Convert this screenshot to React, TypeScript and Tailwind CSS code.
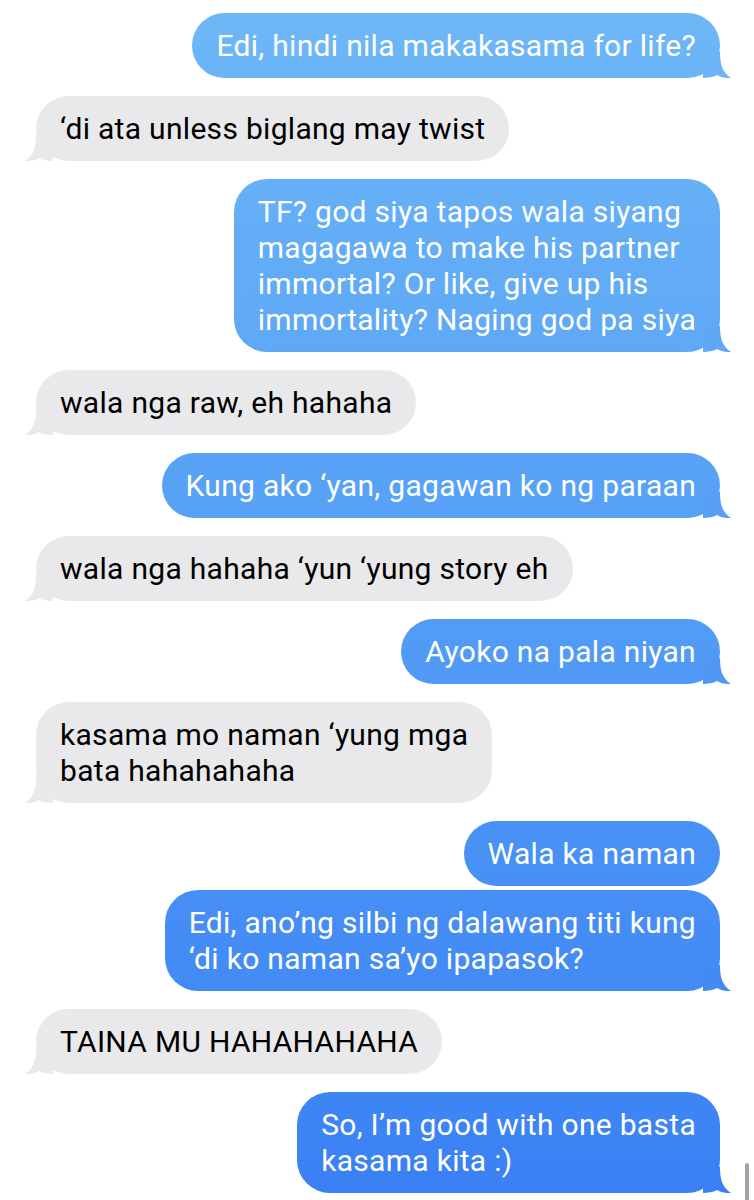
type Msg = {
  me: boolean;
  lines: string[];
  tail: boolean;
  gap: string;
};

const msgs: Msg[] = [
  { me: true, lines: ["Edi, hindi nila makakasama for life?"], tail: true, gap: "mt-0" },
  { me: false, lines: ["\u2018di ata unless biglang may twist"], tail: true, gap: "mt-[18px]" },
  {
    me: true,
    lines: [
      "TF? god siya tapos wala siyang",
      "magagawa to make his partner",
      "immortal? Or like, give up his",
      "immortality? Naging god pa siya",
    ],
    tail: true,
    gap: "mt-[18px]",
  },
  { me: false, lines: ["wala nga raw, eh hahaha"], tail: true, gap: "mt-[18px]" },
  { me: true, lines: ["Kung ako \u2018yan, gagawan ko ng paraan"], tail: true, gap: "mt-[18px]" },
  { me: false, lines: ["wala nga hahaha \u2018yun \u2018yung story eh"], tail: true, gap: "mt-[18px]" },
  { me: true, lines: ["Ayoko na pala niyan"], tail: true, gap: "mt-[18px]" },
  { me: false, lines: ["kasama mo naman \u2018yung mga", "bata hahahahaha"], tail: true, gap: "mt-[18px]" },
  { me: true, lines: ["Wala ka naman"], tail: false, gap: "mt-[18px]" },
  {
    me: true,
    lines: ["Edi, ano\u2019ng silbi ng dalawang titi kung", "\u2018di ko naman sa\u2019yo ipapasok?"],
    tail: true,
    gap: "mt-[4px]",
  },
  { me: false, lines: ["TAINA MU HAHAHAHAHA"], tail: true, gap: "mt-[18px]" },
  { me: true, lines: ["So, I\u2019m good with one basta", "kasama kita :)"], tail: true, gap: "mt-[18px]" },
];

// colour of the page-wide blue gradient at a given y (0..1200)
function blueAt(y: number) {
  const t = Math.min(1, Math.max(0, y / 1200));
  const a = [0x6e, 0xb8, 0xf7];
  const b = [0x3a, 0x80, 0xf4];
  const c = a.map((v, i) => Math.round(v + (b[i] - v) * t));
  return `rgb(${c[0]},${c[1]},${c[2]})`;
}

const tailY = [78, 160, 352, 435, 517, 600, 680, 798, 880, 984, 1065, 1193];

function Tail({ me, color }: { me: boolean; color: string }) {
  return (
    <svg
      width="28"
      height="26"
      viewBox="0 0 28 26"
      className={
        me
          ? "absolute bottom-0 right-[-11px]"
          : "absolute bottom-0 left-[-11px] -scale-x-100"
      }
    >
      <path
        d="M0 0 L17 0 C17 12 19 20 28 26 C22 26.5 17.5 25 14 23 C10 25.2 5 26 0 26 Z"
        fill={color}
      />
    </svg>
  );
}

function Bubble({ m, i }: { m: Msg; i: number }) {
  const color = m.me ? blueAt(tailY[i]) : "#e9e9eb";
  return (
    <div className={`flex ${m.me ? "justify-end" : "justify-start"} ${m.gap}`}>
      <div
        className={
          m.me
            ? "relative rounded-[33px] bg-fixed bg-linear-to-b from-[#6eb8f7] to-[#3a80f4] px-[24px] py-[14.5px] text-white"
            : "relative rounded-[33px] bg-[#e9e9eb] px-[24px] py-[14.5px] text-black"
        }
      >
        {m.tail && <Tail me={m.me} color={color} />}
        <div className="relative text-[30px] leading-[36px] tracking-[0.3px] whitespace-nowrap">
          {m.lines.map((l, k) => (
            <div key={k}>{l}</div>
          ))}
        </div>
      </div>
    </div>
  );
}

export default function App() {
  return (
    <div
      className="relative h-[1200px] w-[754px] overflow-hidden bg-white pl-[36px] pr-[34px] pt-[13px]"
      style={{ fontFamily: "Roboto, 'Liberation Sans', sans-serif" }}
    >
      {msgs.map((m, i) => (
        <Bubble key={i} m={m} i={i} />
      ))}
      <div className="absolute right-[5px] top-[1163px] h-[40px] w-[4px] rounded-full bg-[#a3a3a3]" />
    </div>
  );
}
